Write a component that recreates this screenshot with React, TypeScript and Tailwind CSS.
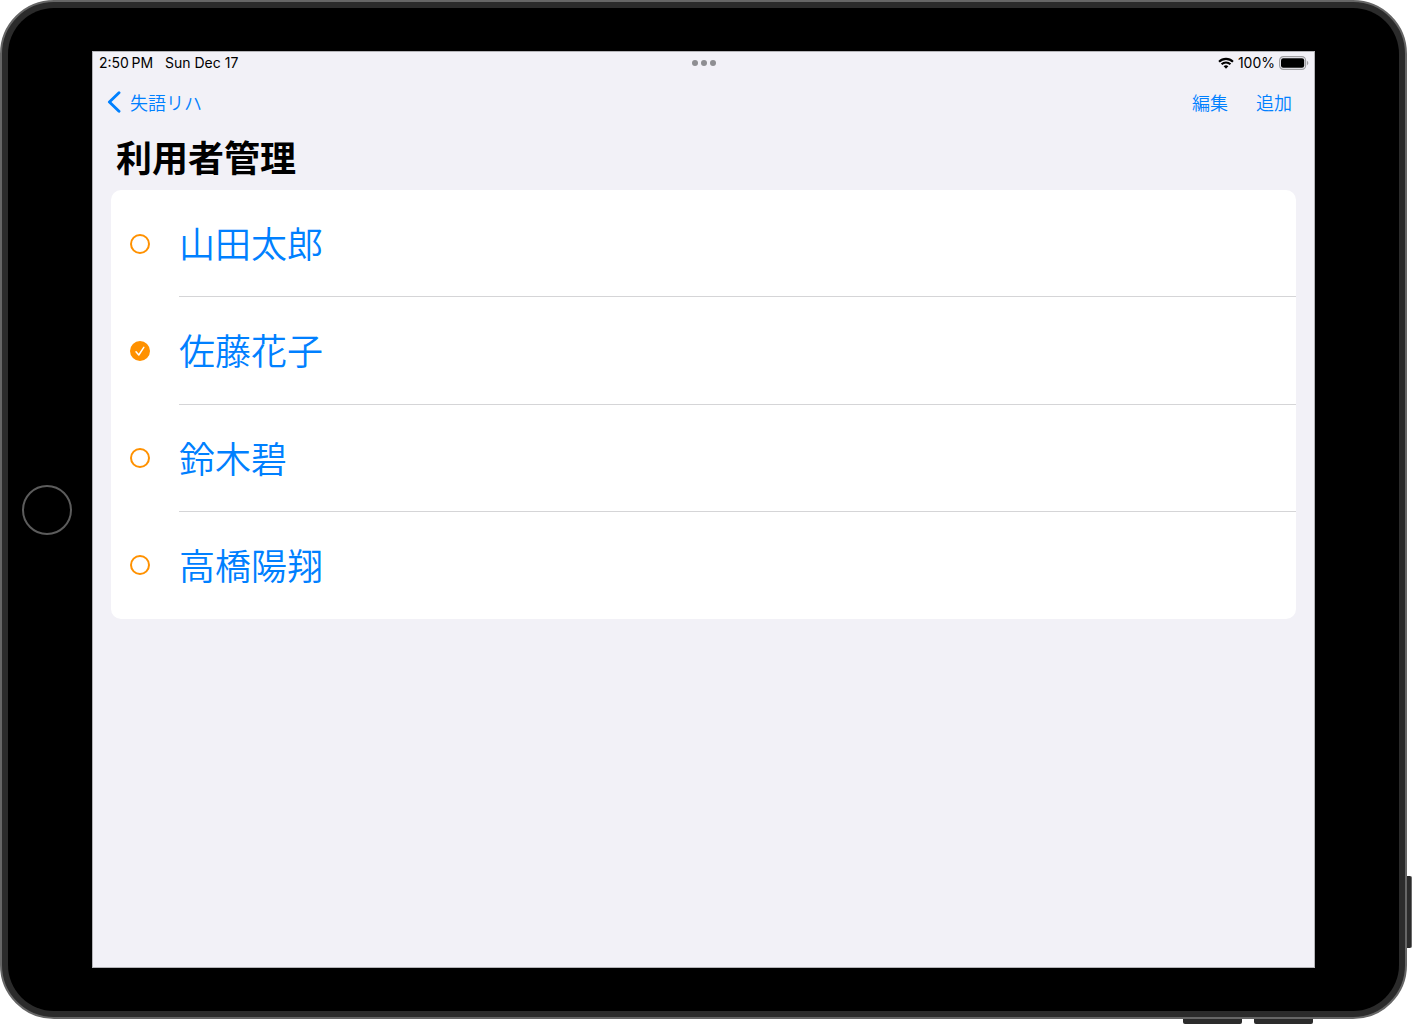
import { useState } from 'react';

const users = ['山田太郎', '佐藤花子', '鈴木碧', '高橋陽翔'];

function WifiIcon() {
  return (
    <svg viewBox="0 0 17 12" className="h-3 w-4" aria-hidden="true">
      <path
        d="M1.1 4.6a10.6 10.6 0 0 1 14.8 0M3.8 7.4a6.7 6.7 0 0 1 9.4 0"
        fill="none"
        stroke="#000"
        strokeWidth="2.2"
      />
      <path d="M8.5 12 6 9.5a3.6 3.6 0 0 1 5 0z" fill="#000" />
    </svg>
  );
}

function BatteryIcon() {
  return (
    <svg viewBox="0 0 30 14" className="h-[14px] w-[30px]" aria-hidden="true">
      <rect x="0.6" y="0.6" width="26" height="12.8" rx="3.8" fill="none" stroke="#a0a0a3" strokeWidth="1.2" />
      <rect x="2" y="2.2" width="23.2" height="9.6" rx="2.2" fill="#000" />
      <path d="M28 4.8c1.8.7 1.8 3.7 0 4.4z" fill="#a0a0a3" />
    </svg>
  );
}

function StatusBar() {
  return (
    <div className="grid h-[22px] grid-cols-3 items-center pr-[5px] pl-[6px] font-['Inter',sans-serif] text-sm text-black">
      <div className="flex gap-3">
        {/* thin space between the time and PM */}
        <span>{'2:50\u2009PM'}</span>
        <span>Sun Dec 17</span>
      </div>
      <button type="button" aria-label="マルチタスク" className="flex gap-[3px] justify-self-center">
        <span className="size-[6px] rounded-full bg-[#8e8e92]" />
        <span className="size-[6px] rounded-full bg-[#8e8e92]" />
        <span className="size-[6px] rounded-full bg-[#8e8e92]" />
      </button>
      <div className="flex items-center justify-end gap-1">
        <WifiIcon />
        <span>100%</span>
        <BatteryIcon />
      </div>
    </div>
  );
}

function UserRow({ name, selected, onSelect }: { name: string; selected: boolean; onSelect: () => void }) {
  return (
    <label className="group flex cursor-pointer items-stretch">
      <span className="grid w-[68px] place-items-center pr-[10px]">
        <input
          type="radio"
          name="user"
          checked={selected}
          onChange={onSelect}
          className="col-start-1 row-start-1 size-5 appearance-none rounded-full border-2 border-[#ff9100] bg-white checked:bg-[#ff9100]"
        />
        {selected && (
          <svg viewBox="0 0 20 20" className="pointer-events-none col-start-1 row-start-1 size-5" aria-hidden="true">
            <path
              d="M6 10.7 8.8 14 13.8 6.3"
              fill="none"
              stroke="#fff"
              strokeWidth="1.5"
              strokeLinecap="round"
              strokeLinejoin="round"
            />
          </svg>
        )}
      </span>
      <span className="flex flex-1 items-center border-b border-[#d5d5d7] pb-[2px] text-4xl font-[350] text-[#0080ff] group-last:border-transparent">
        {name}
      </span>
    </label>
  );
}

function Screen() {
  const [current, setCurrent] = useState('佐藤花子');

  return (
    <main className="flex-1 border border-[#b4b4b8] bg-[#f2f1f7] font-['Noto_Sans_CJK_JP',sans-serif]">
      <StatusBar />

      <nav className="flex h-14 items-center justify-between pr-[22px] pl-[14px] text-lg font-[350] text-[#0080ff]">
        <a href="#home" className="flex items-center gap-[9px]">
          <svg viewBox="0 0 14 22" className="h-[22px] w-[14px]" aria-hidden="true">
            <path
              d="M12 1.8 2.4 11 12 20.2"
              fill="none"
              stroke="currentColor"
              strokeWidth="2.9"
              strokeLinecap="round"
              strokeLinejoin="round"
            />
          </svg>
          失語リハ
        </a>
        <div className="flex gap-7">
          <button type="button">編集</button>
          <button type="button">追加</button>
        </div>
      </nav>

      <h1 className="px-[23px] pb-2 text-4xl leading-[52px] font-bold text-black">利用者管理</h1>

      {/* user list, one selectable at a time */}
      <div className="mx-[18px] grid min-h-[429px] auto-rows-fr rounded-[10px] bg-white">
        {users.map((name) => (
          <UserRow key={name} name={name} selected={name === current} onSelect={() => setCurrent(name)} />
        ))}
      </div>
    </main>
  );
}

export default function App() {
  return (
    <div className="grid min-h-screen grid-cols-[1fr_5px] grid-rows-[1fr_5px] bg-white">
      {/* tablet body */}
      <div className="flex rounded-[54px] border-2 border-[#666666] bg-[#2b2b2b] p-[6px]">
        <div className="flex flex-1 rounded-[46px] bg-black py-[43px] pr-[84px]">
          <div className="flex w-[84px] items-center pl-[14px]">
            <button type="button" aria-label="ホーム" className="size-[50px] rounded-full border-2 border-[#5c5c5c]" />
          </div>
          <Screen />
        </div>
      </div>

      {/* power button */}
      <div className="flex flex-col justify-end pb-[71px]">
        <div className="h-[72px] rounded-r-xs border-r border-[#6a6a6a] bg-[#2b2b2b]" />
      </div>

      {/* volume buttons */}
      <div className="flex justify-end gap-3 pr-[94px]">
        <div className="w-[59px] rounded-b-xs bg-[#2b2b2b]" />
        <div className="w-[59px] rounded-b-xs bg-[#2b2b2b]" />
      </div>
    </div>
  );
}
